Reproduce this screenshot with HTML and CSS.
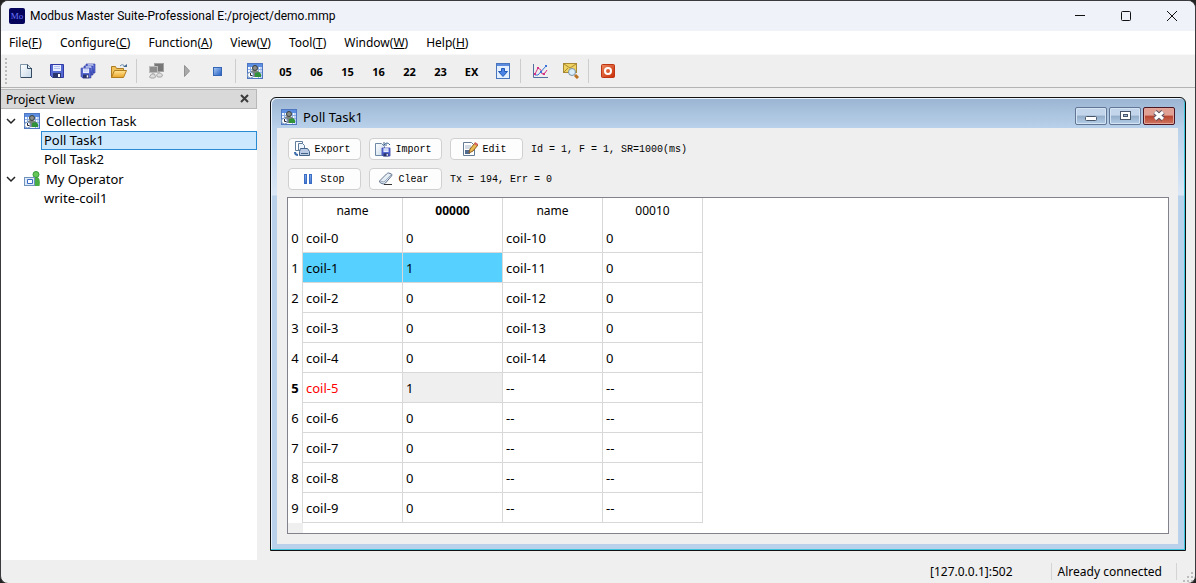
FILE: index.html
```html
<!DOCTYPE html>
<html lang="en">
<head>
    <meta charset="UTF-8">
    <meta name="viewport" content="width=device-width, initial-scale=1.0">
    <title>Modbus Master Suite-Professional</title>
    <link rel="stylesheet" href="styles.css">
</head>
<body>

    <!-- shared icons -->
    <svg class="defs" width="0" height="0">
        <defs>
            <linearGradient id="blue" x1="0" y1="0" x2="1" y2="1">
                <stop offset="0" stop-color="#a9cbf5"/>
                <stop offset="1" stop-color="#2059c0"/>
            </linearGradient>
            <linearGradient id="paper" x1="0" y1="0" x2="1" y2="1">
                <stop offset="0" stop-color="#ffffff"/>
                <stop offset="1" stop-color="#c4d8e8"/>
            </linearGradient>
            <linearGradient id="gold" x1="0" y1="0" x2="0" y2="1">
                <stop offset="0" stop-color="#ffe694"/>
                <stop offset="1" stop-color="#eba52a"/>
            </linearGradient>
            <linearGradient id="red" x1="0" y1="0" x2="1" y2="1">
                <stop offset="0" stop-color="#ee8a62"/>
                <stop offset="1" stop-color="#c92c05"/>
            </linearGradient>
        </defs>
        <symbol id="task" viewBox="0 0 16 16">
            <rect x="0.5" y="0.5" width="15" height="15" fill="#f4f8ff" stroke="#4f76c0"/>
            <rect x="1" y="1" width="14" height="3" fill="#5c8ee2"/>
            <path d="M1 6.500h14M1 9.500h14M1 12.500h14M3.500 4v11M11.500 4v11M14 4v11" stroke="#8fb0e6" fill="none"/>
            <path d="M3 12q0-5 4-5t6 3v4H5z" fill="#7d827f"/>
            <path d="M8 10l4-1 2 2v3H8z" fill="#32923a"/>
            <circle cx="8" cy="5" r="2.500" fill="#8a8d88" stroke="#3a3e3d"/>
            <circle cx="3.500" cy="12" r="3" fill="#fff" stroke="#6d8fbd"/>
            <path d="M3.500 10v2.500h2" stroke="#223" fill="none"/>
        </symbol>
        <symbol id="floppy" viewBox="0 0 16 16">
            <path d="M1.500 1.500h13v13H3.500l-2-2z" fill="#5569d2" stroke="#3039a5"/>
            <rect x="4" y="2" width="8" height="6" fill="#e9efff"/>
            <path d="M5 3.500h6M5 5.500h6" stroke="#b2c1ed"/>
            <rect x="4" y="10" width="8" height="5" fill="#29346d"/>
            <rect x="9" y="11" width="2" height="3" fill="#fff"/>
        </symbol>
    </svg>

    <div class="app">
        <header class="titlebar">
            <span class="logo">Mo</span>
            <span class="caption">Modbus Master Suite-Professional E:/project/demo.mmp</span>
            <div class="win-buttons">
                <button aria-label="Minimize"><svg width="12" height="12"><path d="M1 5.500h10"/></svg></button>
                <button aria-label="Maximize"><svg width="12" height="12"><rect x="1.500" y="1.500" width="9" height="9" rx="1"/></svg></button>
                <button aria-label="Close"><svg width="12" height="12"><path d="M1 1l10 10M11 1L1 11"/></svg></button>
            </div>
        </header>

        <nav class="menubar">
            <button>File(<u>F</u>)</button>
            <button>Configure(<u>C</u>)</button>
            <button>Function(<u>A</u>)</button>
            <button>View(<u>V</u>)</button>
            <button>Tool(<u>T</u>)</button>
            <button>Window(<u>W</u>)</button>
            <button>Help(<u>H</u>)</button>
        </nav>

        <div class="toolbar">
            <span class="grip"></span>
            <button aria-label="New"><svg width="16" height="16"><path d="M2.500 1.500h7l4 4v9h-11z" fill="url(#paper)" stroke="#7e94a8"/><path d="M9.500 1.500v4h4M13.500 5v9.500H3" fill="none" stroke="#32495f"/></svg></button>
            <button aria-label="Save"><svg width="16" height="16"><use href="#floppy"/></svg></button>
            <button aria-label="Save all"><svg width="16" height="16"><use href="#floppy" x="5" y="0" width="11" height="11"/><use href="#floppy" x="3" y="2" width="11" height="11"/><use href="#floppy" x="0" y="4" width="12" height="12"/></svg></button>
            <button aria-label="Open"><svg width="16" height="16"><path d="M.5 14.500v-11h4l1 2h7v3" fill="#f1c25a" stroke="#ad7c22"/><path d="M.5 14.500l3-7h12l-3 7z" fill="url(#gold)" stroke="#b27d1d"/><path d="M9 3q3-3 5 1" fill="none" stroke="#6789ab"/><path d="M12 4h4V1z" fill="#45698f"/></svg></button>
            <span class="divider"></span>
            <button aria-label="Connect"><svg width="16" height="16"><rect x="6.500" y="0.500" width="9" height="8" fill="#777" stroke="#a2a2a2"/><rect x="1.500" y="3.500" width="8" height="6" fill="#8d8d8d" stroke="#bbb"/><path d="M5 10v2M11 9v2" stroke="#999"/><path d="M1.500 14l2-3h3l1 3-1 1h-4zM8.500 12l2-2h2l2 2-1 2h-4z" fill="#dedede" stroke="#a4a4a4"/></svg></button>
            <button aria-label="Run"><svg width="16" height="16"><path d="M5.500 2.500v11l5-5.500z" fill="#aaa" stroke="#919191"/></svg></button>
            <button aria-label="Stop"><svg width="16" height="16"><rect x="3.500" y="4.500" width="8" height="8" fill="url(#blue)" stroke="#3566b5"/></svg></button>
            <span class="divider"></span>
            <button aria-label="Poll task"><svg width="16" height="16"><use href="#task"/></svg></button>
            <button>05</button>
            <button>06</button>
            <button>15</button>
            <button>16</button>
            <button>22</button>
            <button>23</button>
            <button>EX</button>
            <button aria-label="Download"><svg width="16" height="16"><rect x="1.500" y=".5" width="13" height="15" fill="#e4efff" stroke="#4975bc"/><path d="M2 2h12" stroke="#5a8bdd" stroke-width="2"/><path d="M6.500 5.500v3h-3L8 13.500l4.500-5h-3v-3z" fill="#4c83e5" stroke="#235ab8"/></svg></button>
            <span class="divider"></span>
            <button aria-label="Chart"><svg width="16" height="16"><path d="M1.500 1v13.500H16" fill="none" stroke="#536fa0"/><path d="M3 11l3-6 3 2 1 4 3-1 2-3" fill="none" stroke="#d43483"/><path d="M3 12h3l8-9" fill="none" stroke="#3974db"/><path d="M5 4h2v2H5zM11 10h2v2h-2zM2 10h2v2H2z" fill="#d43483"/><path d="M13 2h2v2h-2zM8 8h2v2H8z" fill="#3974db"/></svg></button>
            <button aria-label="Message log"><svg width="16" height="16"><rect x=".5" y=".5" width="13" height="9" fill="#f0d260" stroke="#a88a35"/><path d="M1 1l6 4 6-4M1 9l4-4" fill="none" stroke="#a88a35"/><circle cx="9" cy="9" r="3.500" fill="#d9edfa" stroke="#7892a6"/><path d="M12 12l3 3" stroke="#b97020" stroke-width="3"/></svg></button>
            <span class="divider"></span>
            <button aria-label="Exit"><svg width="16" height="16"><rect x="1.500" y="1.500" width="13" height="13" rx="1" fill="url(#red)" stroke="#bd3513"/><circle cx="8" cy="8" r="3" fill="none" stroke="#fff" stroke-width="2"/></svg></button>
        </div>

        <main class="workspace">
            <aside class="project">
                <div class="dock-title">
                    <span>Project View</span>
                    <button aria-label="Close project view"><svg width="10" height="10"><path d="M1 1l7 7M8 1L1 8" stroke="#3c3c3c" stroke-width="2"/></svg></button>
                </div>
                <ul class="tree">
                    <li class="branch">
                        <svg class="arrow" width="10" height="10"><path d="M1 3l4 4 4-4" stroke-width="1.500"/></svg>
                        <svg width="16" height="16"><use href="#task"/></svg>
                        Collection Task
                    </li>
                    <li class="leaf selected">Poll Task1</li>
                    <li class="leaf">Poll Task2</li>
                    <li class="branch">
                        <svg class="arrow" width="10" height="10"><path d="M1 3l4 4 4-4" stroke-width="1.500"/></svg>
                        <svg width="16" height="16"><path d="M8 15q-1-9 4-9t3.500 9z" fill="#48ad43"/><circle cx="12" cy="3.500" r="3" fill="#65c758" stroke="#36983b"/><rect x=".5" y="6.500" width="10" height="8" fill="#dfeaf8" stroke="#7094bc"/><path d="M3.500 8.500h5v4h-5z" fill="#fff" stroke="#3b6ac2"/></svg>
                        My Operator
                    </li>
                    <li class="leaf">write-coil1</li>
                </ul>
            </aside>

            <section class="mdi">
                <div class="child">
                    <div class="child-title">
                        <svg width="16" height="16"><use href="#task"/></svg>
                        <span>Poll Task1</span>
                        <div class="child-buttons">
                            <button aria-label="Minimize task"><svg width="14" height="12"><rect x="1.500" y="6.500" width="11" height="4" rx="1" fill="#fff" stroke="#49566a"/></svg></button>
                            <button aria-label="Maximize task"><svg width="14" height="12"><rect x="2.500" y="1.500" width="10" height="8" fill="#fff" stroke="#49566a"/><rect x="5.500" y="4.500" width="4" height="2" fill="#9fb8d5" stroke="#49566a"/></svg></button>
                            <button class="close" aria-label="Close task"><svg width="14" height="12"><path d="M3 2l8 7M11 2L3 9" stroke="#564f60" stroke-width="5"/><path d="M3 2l8 7M11 2L3 9" stroke="#fff" stroke-width="3"/></svg></button>
                        </div>
                    </div>
                    <div class="child-body">
                        <div class="actions">
                            <button><svg width="16" height="16"><path d="M1.500 .5h7v9h-7z" fill="#fff" stroke="#607d9b"/><path d="M4.500 2.500h4l2 2v5h-6z" fill="#eef5ff" stroke="#607d9b"/><path d="M6.500 7.500h7l2 3v4h-10v-4z" fill="#b9cbe4" stroke="#446386"/><path d="M7 12.500h7" stroke="#446386"/><path d="M1 11q0 3 3 3" fill="none" stroke="#3d6fae" stroke-width="2"/></svg>Export</button>
                            <button><svg width="16" height="16"><path d="M.5 2.500h6l3 3v9h-9z" fill="url(#paper)" stroke="#6d87a6"/><use href="#floppy" x="6" y="6" width="10" height="10"/><path d="M9 1v3h3M9 4q3-4 6 0" fill="none" stroke="#39618f"/></svg>Import</button>
                            <button><svg width="16" height="16"><path d="M1.500 1.500h8l3 3v10h-11z" fill="#fff" stroke="#647b96"/><path d="M3 5h6M3 7h6" stroke="#a5b6c9"/><path d="M3 9h5v4H3z" fill="#526b8d"/><path d="M7 12l1-4 5-6 3 2-5 6z" fill="#eabb52" stroke="#8b5c25"/><path d="M13 1l3 2-1 2-3-2z" fill="#d86561"/></svg>Edit</button>
                            <span>Id = 1, F = 1, SR=1000(ms)</span>
                        </div>
                        <div class="actions">
                            <button><svg width="16" height="16"><rect x="4.500" y="3.500" width="2" height="9" fill="url(#blue)" stroke="#386cc5"/><rect x="9.500" y="3.500" width="2" height="9" fill="url(#blue)" stroke="#386cc5"/></svg>Stop</button>
                            <button><svg width="16" height="16"><path d="M1.500 10l7-7q1-1 2-1l3 1q1 1 0 2l-6 7q-1 1-2 1l-3-1q-1-1-1-2z" fill="url(#paper)" stroke="#64748e"/><path d="M2 10l4 1 7-7" fill="none" stroke="#9aa9bd"/><path d="M6 13.500h8" stroke="#333"/></svg>Clear</button>
                            <span>Tx = 194, Err = 0</span>
                        </div>
                        <div class="grid">
                            <table>
                                <thead>
                                    <tr><th></th><th>name</th><th class="current">00000</th><th>name</th><th>00010</th></tr>
                                </thead>
                                <tbody>
                                    <tr><th>0</th><td>coil-0</td><td>0</td><td>coil-10</td><td>0</td></tr>
                                    <tr><th>1</th><td class="on">coil-1</td><td class="on">1</td><td>coil-11</td><td>0</td></tr>
                                    <tr><th>2</th><td>coil-2</td><td>0</td><td>coil-12</td><td>0</td></tr>
                                    <tr><th>3</th><td>coil-3</td><td>0</td><td>coil-13</td><td>0</td></tr>
                                    <tr><th>4</th><td>coil-4</td><td>0</td><td>coil-14</td><td>0</td></tr>
                                    <tr><th class="current">5</th><td class="alarm">coil-5</td><td class="focus">1</td><td>--</td><td>--</td></tr>
                                    <tr><th>6</th><td>coil-6</td><td>0</td><td>--</td><td>--</td></tr>
                                    <tr><th>7</th><td>coil-7</td><td>0</td><td>--</td><td>--</td></tr>
                                    <tr><th>8</th><td>coil-8</td><td>0</td><td>--</td><td>--</td></tr>
                                    <tr><th>9</th><td>coil-9</td><td>0</td><td>--</td><td>--</td></tr>
                                </tbody>
                            </table>
                            <div class="filler"></div>
                        </div>
                    </div>
                </div>
            </section>
        </main>

        <footer class="statusbar">
            <span class="address">[127.0.0.1]:502</span>
            <span class="state">Already connected</span>
            <svg class="size-grip" width="12" height="12"><path d="M8 1h2v2H8zM8 5h2v2H8zM8 9h2v2H8zM4 5h2v2H4zM4 9h2v2H4zM0 9h2v2H0z" fill="#bdbdbd"/></svg>
        </footer>
    </div>

</body>
</html>
```
FILE: styles.css
```css
* {
    box-sizing: border-box;
}

body {
    margin: 0;
    background-color: #222;
    font-family: "Noto Sans", "Open Sans", sans-serif;
    font-size: 12px;
    color: #000;
}

button {
    font: inherit;
    color: inherit;
    padding: 0;
    border: none;
    background: none;
}

svg {
    display: block;
    flex: none;
}

.defs {
    position: absolute;
}

.app {
    display: flex;
    flex-direction: column;
    min-height: 100vh;
    border: 1px solid #3a3a3e;
    border-radius: 8px;
    background-color: #efefef;
    overflow: hidden;
}

/* title bar */
.titlebar {
    display: flex;
    align-items: center;
    height: 30px;
    padding-left: 8px;
    background-color: #f0f2fa;
}

.logo {
    width: 16px;
    height: 16px;
    margin-right: 5px;
    border-radius: 2px;
    background-color: #04045c;
    color: #6d78ff;
    font: 9px/16px "Liberation Serif", serif;
    text-align: center;
}

.caption {
    font-family: Roboto, sans-serif;
}

.win-buttons {
    display: flex;
    margin-left: auto;
}

.win-buttons button {
    display: flex;
    align-items: center;
    justify-content: center;
    width: 46px;
    height: 30px;
}

.win-buttons path,
.win-buttons rect {
    fill: none;
    stroke: #111;
}

/* menu */
.menubar {
    display: flex;
    gap: 18px;
    height: 23px;
    padding-left: 8px;
    background-color: #fff;
}

/* toolbar */
.toolbar {
    display: flex;
    align-items: center;
    height: 34px;
    padding-left: 4px;
    border-top: 1px solid #f8f8f8;
    border-bottom: 1px solid #b4b4b4;
}

.toolbar button {
    display: flex;
    align-items: center;
    justify-content: center;
    width: 31px;
    height: 28px;
    font-size: 11px;
    font-weight: bold;
}

.grip {
    width: 2px;
    height: 26px;
    margin-right: 3px;
    background: repeating-linear-gradient(#bbb 0 2px, transparent 2px 4px);
}

.divider {
    width: 1px;
    height: 24px;
    margin: 0 3px 0 2px;
    background-color: #cdcdcd;
}

/* work area */
.workspace {
    display: flex;
    flex: 1;
    padding-top: 1px;
}

.project {
    display: flex;
    flex-direction: column;
    width: 256px;
    background-color: #fff;
}

.dock-title {
    display: flex;
    align-items: center;
    justify-content: space-between;
    height: 20px;
    padding: 0 6px 0 5px;
    border: solid #b8b8b8;
    border-width: 1px 1px 1px 0;
    background-color: #d9d9d9;
}

.tree {
    margin: 0;
    padding: 2px 0 0;
    list-style: none;
    font-size: 13px;
}

.branch {
    display: flex;
    align-items: center;
    gap: 6px;
    height: 20px;
    padding-left: 5px;
}

.branch .arrow {
    margin-right: 2px;
    fill: none;
    stroke: #222;
}

.leaf {
    height: 19px;
    margin-left: 40px;
    padding-left: 3px;
    line-height: 19px;
}

.leaf.selected {
    padding-left: 2px;
    border: 1px solid #2a8ad4;
    background-color: #cce8ff;
    line-height: 17px;
}

.mdi {
    display: flex;
    flex: 1;
    padding: 8px 9px 9px 13px;
}

/* poll window */
.child {
    display: flex;
    flex-direction: column;
    flex: 1;
    padding: 0 7px 6px 6px;
    border: 1px solid #111;
    border-radius: 6px 6px 0 0;
    background: linear-gradient(#9ab4d2, #b9d1ea 30px, #dae7f6 97px, #b9d1ea 98px);
    box-shadow: inset -1px -1px #3fc4de, inset 1px 1px #e9f4ff;
}

.child-title {
    display: flex;
    align-items: center;
    gap: 6px;
    height: 30px;
    padding: 8px 3px 0 4px;
    font-size: 13px;
}

.child-buttons {
    display: flex;
    gap: 2px;
    margin-left: auto;
    padding-bottom: 2px;
}

.child-buttons button {
    display: flex;
    align-items: center;
    justify-content: center;
    width: 32px;
    height: 18px;
    border: 1px solid #617594;
    border-radius: 2px;
    background: linear-gradient(#c2d5eb 45%, #93adc9 50%, #b4cde7);
    box-shadow: inset 0 0 0 1px #d4e4f5;
}

.child-buttons .close {
    border-color: #4b1522;
    background: linear-gradient(#e0a194 45%, #b84430 50%, #ce7560);
    box-shadow: inset 0 0 0 1px #e3a69b;
}

.child-body {
    display: flex;
    flex-direction: column;
    flex: 1;
    padding: 6px 9px 10px 10px;
    background-color: #efefef;
}

.actions {
    display: flex;
    align-items: center;
    gap: 8px;
    height: 30px;
    padding-left: 1px;
    font-family: "Liberation Mono", monospace;
    font-size: 10px;
}

.actions button {
    display: flex;
    align-items: center;
    justify-content: center;
    gap: 4px;
    width: 73px;
    height: 22px;
    padding-right: 4px;
    border: 1px solid #d0d0d0;
    border-radius: 4px;
    background-color: #fdfdfd;
}

/* register table */
.grid {
    flex: 1;
    margin-top: 3px;
    border: 1px solid #82828c;
    background-color: #fff;
}

table {
    border-collapse: separate;
    border-spacing: 0;
    table-layout: fixed;
    width: 415px;
    font-size: 13px;
}

th,
td {
    height: 30px;
    padding: 0 3px;
    border-right: 1px solid #d8d8d8;
    border-bottom: 1px solid #d8d8d8;
    text-align: left;
    font-weight: normal;
}

thead th {
    width: 100px;
    height: 25px;
    border-bottom: none;
    font-size: 12px;
    text-align: center;
}

th:first-child {
    width: 15px;
    border-bottom: none;
    text-align: center;
}

th.current {
    font-weight: bold;
}

.on {
    background-color: #55d0ff;
}

.alarm {
    color: #f00;
}

.focus {
    background-color: #efefef;
}

.filler {
    width: 15px;
    height: 10px;
    background-color: #efefef;
}

/* status bar */
.statusbar {
    display: flex;
    align-items: center;
    justify-content: flex-end;
    height: 23px;
}

.address {
    padding-right: 38px;
}

.state {
    padding: 0 14px 0 6px;
    border: solid #d4d4d4;
    border-width: 0 1px;
}

.size-grip {
    align-self: flex-end;
    margin-left: 6px;
}
```
